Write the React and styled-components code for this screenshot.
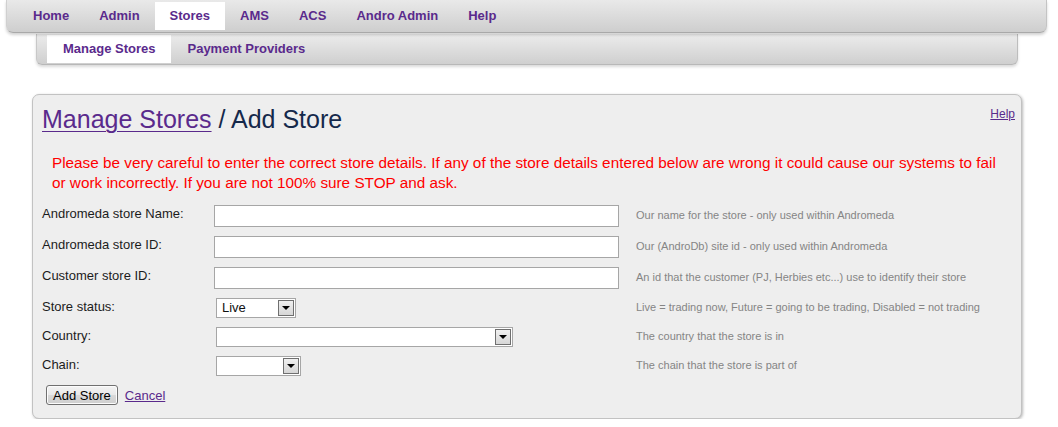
import React from 'react';
import styled, { createGlobalStyle } from 'styled-components';

const GlobalStyle = createGlobalStyle`
  html, body {
    margin: 0;
    padding: 0;
    background: #ffffff;
    font-family: "Liberation Sans", Arial, sans-serif;
  }
`;

const TopBar = styled.div`
  margin: 0 11px 0 6px;
  height: 33px;
  padding: 2px 0 0 11px;
  box-sizing: border-box;
  display: flex;
  background: linear-gradient(#e9e9e9, #cecece);
  border-bottom: 1px solid #a9a9a9;
  border-right: 1px solid #c4c4c4;
  border-left: 1px solid #d0d0d0;
  border-radius: 0 0 7px 7px;
  box-shadow: 0 2px 3px rgba(0, 0, 0, 0.18);
  position: relative;
  z-index: 2;
`;

const NavItem = styled.a`
  display: block;
  height: 28px;
  line-height: 28px;
  padding: 0 15px;
  font-size: 13px;
  font-weight: bold;
  color: #5a2a8c;
  text-decoration: none;
  background: ${p => (p.$active ? '#ffffff' : 'transparent')};
  cursor: pointer;
`;

const SubBar = styled.div`
  margin: 1px 40px 0 36px;
  height: 31px;
  padding: 1px 0 0 10px;
  box-sizing: border-box;
  display: flex;
  background: linear-gradient(#ececec, #cfcfcf);
  border-bottom: 1px solid #b8b8b8;
  border-right: 1px solid #bdbdbd;
  border-left: 1px solid #c8c8c8;
  border-radius: 0 0 6px 6px;
  box-shadow: 0 2px 3px rgba(0, 0, 0, 0.15);
  position: relative;
  z-index: 1;
`;

const SubItem = styled(NavItem)`
  padding: 0 16px;
`;

const Panel = styled.div`
  margin: 29px 36px 0 32px;
  padding: 10px 6px 8px 9px;
  background: #eeeeee;
  border: 1px solid #c2c2c2;
  border-radius: 7px;
  box-shadow: 1px 1px 3px rgba(0, 0, 0, 0.28);
`;

const Header = styled.div`
  display: flex;
  justify-content: space-between;
  align-items: flex-start;
`;

const Title = styled.h1`
  margin: 0;
  font-size: 25px;
  font-weight: normal;
  line-height: 29px;
  color: #15294b;
`;

const TitleLink = styled.a`
  color: #5a2a8c;
  text-decoration: underline;
  text-decoration-thickness: 1px;
  text-underline-offset: 3px;
`;

const SmallLink = styled.a`
  font-size: ${p => p.$size || 12}px;
  color: #5a2a8c;
  text-decoration: underline;
  margin-top: ${p => p.$top || 0}px;
`;

const Warning = styled.p`
  margin: 19px 10px 0 10px;
  font-size: 15.3px;
  line-height: 20px;
  color: #ff0000;
`;

const Form = styled.div`
  margin-top: 7px;
  display: grid;
  grid-template-columns: 172px 422px 1fr;
  grid-template-rows: 31px 31px 31px 29px 29px 29px 30px;
  align-items: center;
`;

const Label = styled.div`
  font-size: 13px;
  color: #1c1c1c;
  padding-bottom: ${p => (p.$tight ? 2 : 4)}px;
`;

const Hint = styled.div`
  font-size: 11px;
  color: #858585;
  padding-bottom: 2px;
`;

const TextInput = styled.input`
  display: block;
  width: 405px;
  height: 22px;
  box-sizing: border-box;
  border: 1px solid #a6a6a6;
  background: #ffffff;
  padding: 1px 3px;
  font-size: 13px;
  font-family: inherit;
  outline: none;
`;

const SelectBox = styled.div`
  margin-left: 2px;
  width: ${p => p.$w}px;
  height: 20px;
  box-sizing: border-box;
  border: 1px solid #a6a6a6;
  background: #ffffff;
  display: flex;
  align-items: center;
  justify-content: space-between;
  padding: 1px;
`;

const SelectValue = styled.span`
  font-size: 13px;
  color: #111;
  padding-left: 4px;
`;

const DropButton = styled.span`
  width: 16px;
  height: 16px;
  box-sizing: border-box;
  border: 1px solid #6f6f6f;
  background: linear-gradient(#f0f0f0, #d6d6d6);
  display: flex;
  align-items: center;
  justify-content: center;

  &::after {
    content: '';
    border-left: 4px solid transparent;
    border-right: 4px solid transparent;
    border-top: 4px solid #000;
    margin-top: 1px;
  }
`;

const Actions = styled.div`
  grid-column: 1 / -1;
  display: flex;
  align-items: center;
  gap: 7px;
  padding-left: 4px;
`;

const Button = styled.button`
  height: 20px;
  padding: 0 6px;
  font-size: 13px;
  font-family: inherit;
  color: #000;
  border: 1px solid #707070;
  border-radius: 3px;
  background: linear-gradient(#f4f4f4 0%, #e8e8e8 50%, #d9d9d9 51%, #cfcfcf 100%);
  box-shadow: inset 0 0 0 1px #fcfcfc;
  cursor: pointer;
`;

const Select = ({ width, value }) => (
  <SelectBox $w={width}>
    <SelectValue>{value}</SelectValue>
    <DropButton />
  </SelectBox>
);

const fields = [
  { label: 'Andromeda store Name:', hint: 'Our name for the store - only used within Andromeda' },
  { label: 'Andromeda store ID:', hint: 'Our (AndroDb) site id - only used within Andromeda' },
  { label: 'Customer store ID:', hint: 'An id that the customer (PJ, Herbies etc...) use to identify their store' },
];

const selects = [
  { label: 'Store status:', hint: 'Live = trading now, Future = going to be trading, Disabled = not trading', width: 80, value: 'Live' },
  { label: 'Country:', hint: 'The country that the store is in', width: 297, value: '' },
  { label: 'Chain:', hint: 'The chain that the store is part of', width: 85, value: '' },
];

function App() {
  const nav = ['Home', 'Admin', 'Stores', 'AMS', 'ACS', 'Andro Admin', 'Help'];

  return (
    <>
      <GlobalStyle />
      <TopBar>
        {nav.map(n => (
          <NavItem key={n} $active={n === 'Stores'}>{n}</NavItem>
        ))}
      </TopBar>
      <SubBar>
        <SubItem $active>Manage Stores</SubItem>
        <SubItem>Payment Providers</SubItem>
      </SubBar>

      <Panel>
        <Header>
          <Title>
            <TitleLink href="#">Manage Stores</TitleLink> / Add Store
          </Title>
          <SmallLink href="#" $top={2}>Help</SmallLink>
        </Header>

        <Warning>
          Please be very careful to enter the correct store details. If any of the store details entered below are wrong it could cause our systems to fail or work incorrectly. If you are not 100% sure STOP and ask.
        </Warning>

        <Form>
          {fields.map(f => (
            <React.Fragment key={f.label}>
              <Label>{f.label}</Label>
              <div><TextInput type="text" /></div>
              <Hint>{f.hint}</Hint>
            </React.Fragment>
          ))}
          {selects.map(s => (
            <React.Fragment key={s.label}>
              <Label $tight>{s.label}</Label>
              <div><Select width={s.width} value={s.value} /></div>
              <Hint>{s.hint}</Hint>
            </React.Fragment>
          ))}
          <Actions>
            <Button>Add Store</Button>
            <SmallLink href="#" $size={13}>Cancel</SmallLink>
          </Actions>
        </Form>
      </Panel>
    </>
  );
}

export default App;
